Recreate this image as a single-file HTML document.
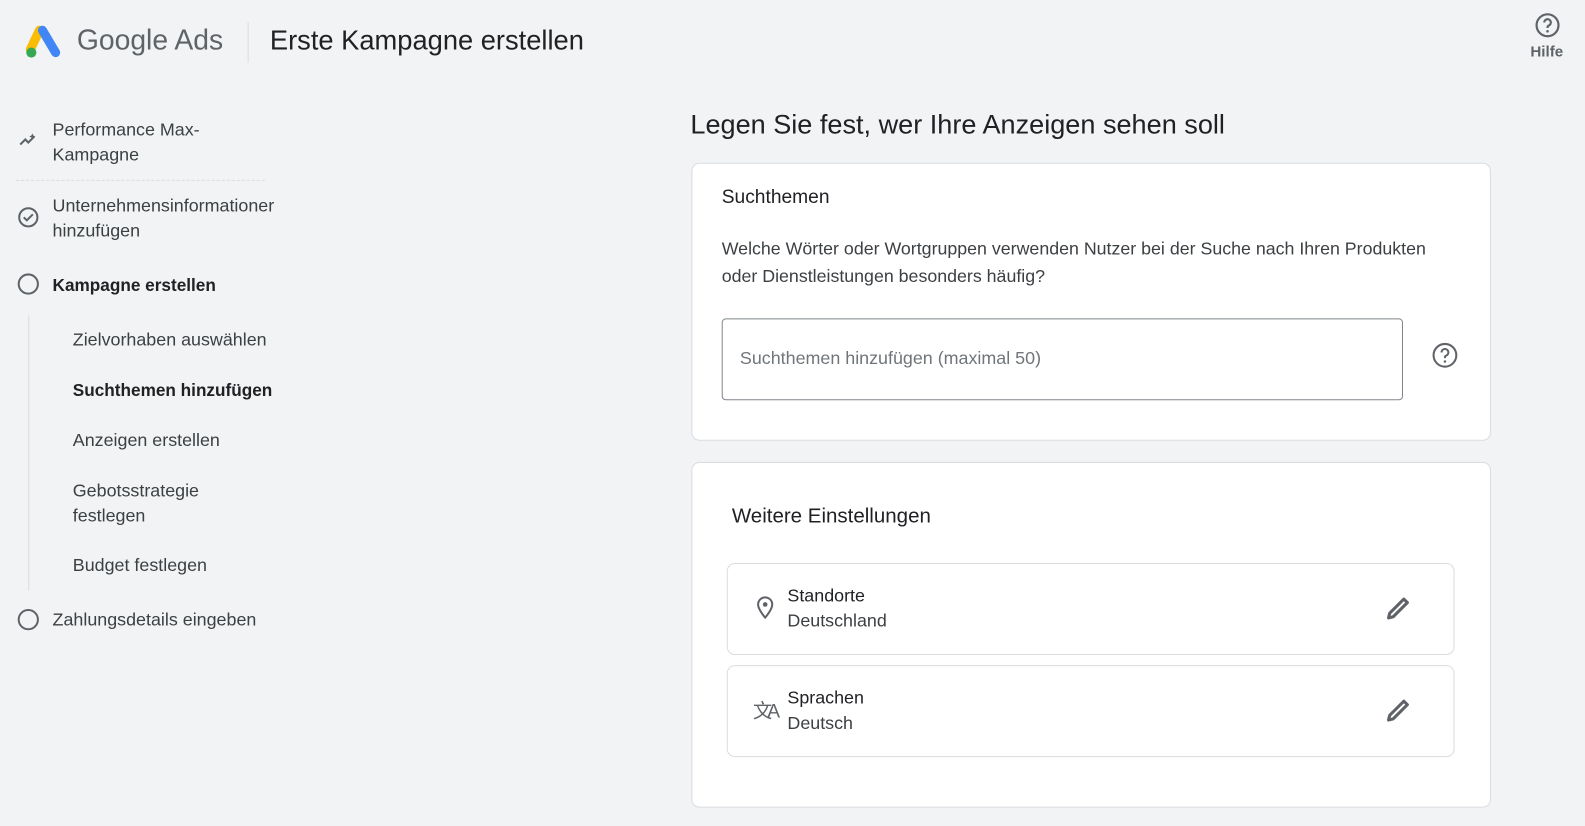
<!DOCTYPE html>
<html><head><meta charset="utf-8"><style>
html,body{margin:0;padding:0;}
body{width:1585px;height:826px;background:#f1f3f4;font-family:"Liberation Sans",sans-serif;color:#3c4043;overflow:hidden;}
#w{position:relative;width:1568px;height:817px;transform:scale(1.0108);transform-origin:0 0;}
.a{position:absolute;}
.t{font-size:17.7px;color:#3c4043;line-height:25px;}
.card{position:absolute;background:#fff;border:1px solid #dadce0;border-radius:8px;}
.row{position:absolute;background:#fff;border:1px solid #dadce0;border-radius:8px;left:719px;width:718px;height:89px;}
</style></head><body><div id="w">
<svg class="a" style="left:24px;top:25px" width="38" height="33" viewBox="0 0 38 33">
<path d="M15 5 L6 24" stroke="#fbbc04" stroke-width="9" stroke-linecap="round"/>
<path d="M18 5 L31 27" stroke="#4285f4" stroke-width="9" stroke-linecap="round"/>
<circle cx="7" cy="27" r="5" fill="#34a853"/></svg>
<div class="a" style="left:76px;top:24px;font-size:28px;color:#5f6368;">Google Ads</div>
<div class="a" style="left:245px;top:22px;width:1px;height:40px;background:#dadce0"></div>
<div class="a" style="left:267px;top:25px;font-size:27px;color:#202124;">Erste Kampagne erstellen</div>
<svg class="a" style="left:1518px;top:12px" width="26" height="26" viewBox="0 0 24 24"><circle cx="12" cy="12" r="10" fill="none" stroke="#5f6368" stroke-width="2"/><path d="M9 9.5a3 3 0 1 1 4 2.8c-.8.4-1 1-1 1.7v.5" fill="none" stroke="#5f6368" stroke-width="2"/><circle cx="12" cy="17.5" r="1.2" fill="#5f6368"/></svg>
<div class="a" style="left:1514px;top:43px;font-size:15px;font-weight:bold;color:#5f6368">Hilfe</div>

<svg class="a" style="left:19px;top:131px" width="18" height="16" viewBox="0 0 18 16"><path d="M1 12 L6 7 L9 10 L15 4" fill="none" stroke="#5f6368" stroke-width="2"/><path d="M13 1 l1 2 2 1 -2 1 -1 2 -1-2 -2-1 2-1z" fill="#5f6368"/></svg>
<div class="a t" style="left:52px;top:116px">Performance Max-<br>Kampagne</div>
<div class="a" style="left:16px;top:178px;width:246px;border-top:1px dashed #dadce0"></div>
<svg class="a" style="left:17px;top:204px" width="22" height="22" viewBox="0 0 22 22"><circle cx="11" cy="11" r="9" fill="none" stroke="#5f6368" stroke-width="2"/><path d="M6.5 11l3 3 6-6" fill="none" stroke="#5f6368" stroke-width="2"/></svg>
<div class="a t" style="left:52px;top:191px">Unternehmensinformationer<br>hinzufügen</div>
<svg class="a" style="left:17px;top:270px" width="22" height="22"><circle cx="11" cy="11" r="9.5" fill="none" stroke="#5f6368" stroke-width="2"/></svg>
<div class="a t" style="left:52px;top:270px;font-weight:bold;color:#202124;font-size:17px">Kampagne erstellen</div>
<div class="a" style="left:28px;top:312px;width:1px;height:272px;background:#dadce0"></div>
<div class="a t" style="left:72px;top:324px">Zielvorhaben auswählen</div>
<div class="a t" style="left:72px;top:374px;font-weight:bold;color:#202124;font-size:17px">Suchthemen hinzufügen</div>
<div class="a t" style="left:72px;top:423px">Anzeigen erstellen</div>
<div class="a t" style="left:72px;top:473px">Gebotsstrategie<br>festlegen</div>
<div class="a t" style="left:72px;top:547px">Budget festlegen</div>
<svg class="a" style="left:17px;top:602px" width="22" height="22"><circle cx="11" cy="11" r="9.5" fill="none" stroke="#5f6368" stroke-width="2"/></svg>
<div class="a t" style="left:52px;top:601px">Zahlungsdetails eingeben</div>

<div class="a" style="left:683px;top:108px;font-size:26.8px;color:#202124">Legen Sie fest, wer Ihre Anzeigen sehen soll</div>
<div class="card" style="left:684px;top:161px;width:789px;height:273px"></div>
<div class="a" style="left:714px;top:185px;font-size:19px;color:#202124">Suchthemen</div>
<div class="a t" style="left:714px;top:233px;line-height:27px;color:#3c4043;font-size:17.6px">Welche Wörter oder Wortgruppen verwenden Nutzer bei der Suche nach Ihren Produkten<br>oder Dienstleistungen besonders häufig?</div>
<div class="a" style="left:714px;top:315px;width:672px;height:79px;border:1px solid #80868b;border-radius:4px;background:#fff"></div>
<div class="a t" style="left:732px;top:342px;color:#70757a">Suchthemen hinzufügen (maximal 50)</div>
<svg class="a" style="left:1416px;top:338px" width="27" height="27" viewBox="0 0 24 24"><circle cx="12" cy="12" r="10" fill="none" stroke="#5f6368" stroke-width="1.8"/><path d="M9 9.5a3 3 0 1 1 4 2.8c-.8.4-1 1-1 1.7v.5" fill="none" stroke="#5f6368" stroke-width="1.8"/><circle cx="12" cy="17.5" r="1.1" fill="#5f6368"/></svg>

<div class="card" style="left:684px;top:457px;width:789px;height:340px"></div>
<div class="a" style="left:724px;top:500px;font-size:20.3px;color:#202124">Weitere Einstellungen</div>
<div class="row" style="top:557px"></div>
<svg class="a" style="left:747px;top:589px" width="20" height="24" viewBox="0 0 20 24"><path d="M10 2a7 7 0 0 0-7 7c0 5 7 13 7 13s7-8 7-13a7 7 0 0 0-7-7z" fill="none" stroke="#5f6368" stroke-width="2"/><circle cx="10" cy="9" r="2.3" fill="#5f6368"/></svg>
<div class="a t" style="left:779px;top:577px;color:#202124">Standorte</div>
<div class="a t" style="left:779px;top:602px">Deutschland</div>
<svg class="a" style="left:1369px;top:588px" width="28" height="28" viewBox="0 0 24 24"><path d="M4 20l1-4L17 4l3 3L8 19z" fill="none" stroke="#5f6368" stroke-width="2.6" stroke-linejoin="round"/></svg>
<div class="row" style="top:658px"></div>
<div class="a" style="left:745px;top:689px;font-size:19px;color:#5f6368;letter-spacing:-5px">文A</div>
<div class="a t" style="left:779px;top:678px;color:#202124">Sprachen</div>
<div class="a t" style="left:779px;top:703px">Deutsch</div>
<svg class="a" style="left:1369px;top:689px" width="28" height="28" viewBox="0 0 24 24"><path d="M4 20l1-4L17 4l3 3L8 19z" fill="none" stroke="#5f6368" stroke-width="2.6" stroke-linejoin="round"/></svg>
</div></body></html>
